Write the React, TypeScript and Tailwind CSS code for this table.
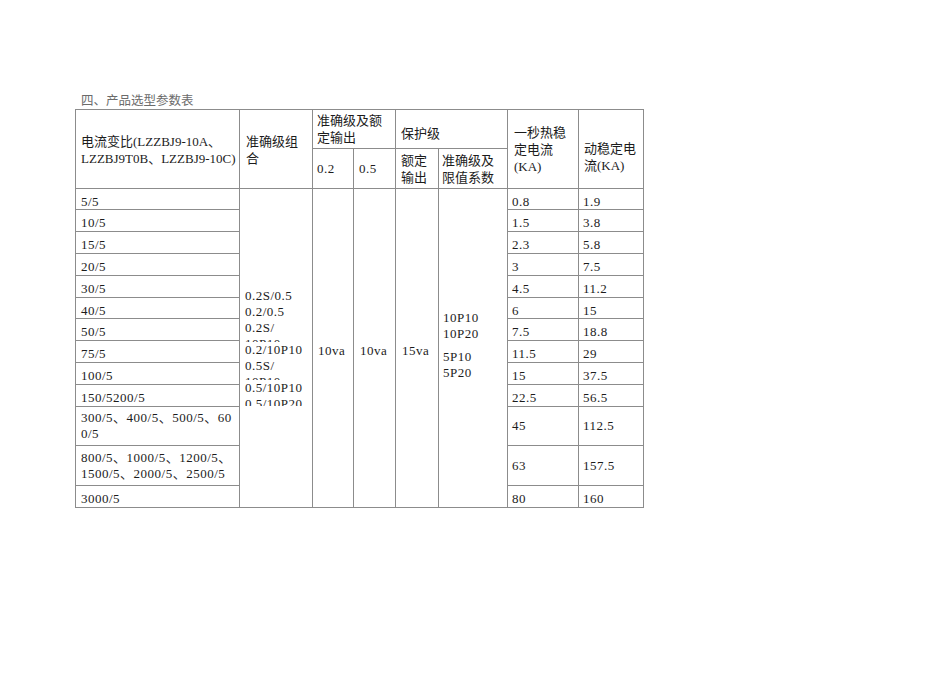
import React from 'react';

type Row = {
    a: string[];
    k: string;
    d: string;
    h: string;
    tall?: boolean;
};

const rows: Row[] = [
    { a: ['5/5'], k: '0.8', d: '1.9', h: 'h-[21px]' },
    { a: ['10/5'], k: '1.5', d: '3.8', h: 'h-[22px]' },
    { a: ['15/5'], k: '2.3', d: '5.8', h: 'h-[22px]' },
    { a: ['20/5'], k: '3', d: '7.5', h: 'h-[22px]' },
    { a: ['30/5'], k: '4.5', d: '11.2', h: 'h-[22px]' },
    { a: ['40/5'], k: '6', d: '15', h: 'h-[21px]' },
    { a: ['50/5'], k: '7.5', d: '18.8', h: 'h-[22px]' },
    { a: ['75/5'], k: '11.5', d: '29', h: 'h-[22px]' },
    { a: ['100/5'], k: '15', d: '37.5', h: 'h-[22px]' },
    { a: ['150/5200/5'], k: '22.5', d: '56.5', h: 'h-[22px]' },
    { a: ['300/5、400/5、500/5、60', '0/5'], k: '45', d: '112.5', h: 'h-[39px]', tall: true },
    { a: ['800/5、1000/5、1200/5、', '1500/5、2000/5、2500/5'], k: '63', d: '157.5', h: 'h-[40px]', tall: true },
    { a: ['3000/5'], k: '80', d: '160', h: 'h-[22px]' },
];

const cell = 'border border-[#8c8c8c] p-0';

export default function App() {
    return (
        <div
            className="min-h-screen bg-white pl-[75px] pt-[94px] text-[#1c1c1c]"
            style={{ fontFamily: '"Liberation Serif", "Noto Sans CJK SC", serif' }}
        >
            <div className="pl-[6px] text-[12.5px] leading-[15px] text-[#6b6b6b]">四、产品选型参数表</div>

            <table className="table-fixed border-collapse text-[13px] leading-[17px]">
                <colgroup>
                    <col className="w-[164px]" />
                    <col className="w-[73px]" />
                    <col className="w-[41px]" />
                    <col className="w-[42px]" />
                    <col className="w-[43px]" />
                    <col className="w-[69px]" />
                    <col className="w-[71px]" />
                    <col className="w-[65px]" />
                </colgroup>
                <tbody>
                    {/* header */}
                    <tr className="h-[39px]">
                        <td rowSpan={2} className={`${cell} pl-[5px] pt-[2px] align-middle leading-[17.5px]`}>
                            电流变比(LZZBJ9-10A、<br />LZZBJ9T0B、LZZBJ9-10C)
                        </td>
                        <td rowSpan={2} className={`${cell} pl-[6px] pt-[2px] align-middle leading-[17.5px]`}>
                            准确级组<br />合
                        </td>
                        <td colSpan={2} className={`${cell} pl-[4px] align-middle`}>
                            准确级及额<br />定输出
                        </td>
                        <td colSpan={2} className={`${cell} pl-[5px] pt-[8px] align-middle`}>
                            保护级
                        </td>
                        <td rowSpan={2} className={`${cell} pl-[6px] align-middle`}>
                            一秒热稳<br />定电流<br />(KA)
                        </td>
                        <td rowSpan={2} className={`${cell} pl-[5px] pt-[16px] align-middle`}>
                            动稳定电<br />流(KA)
                        </td>
                    </tr>
                    <tr className="h-[40px]">
                        <td className={`${cell} pl-[4px] align-middle tracking-[0.5px]`}>0.2</td>
                        <td className={`${cell} pl-[5px] align-middle tracking-[0.5px]`}>0.5</td>
                        <td className={`${cell} pl-[5px] align-middle`}>
                            额定<br />输出
                        </td>
                        <td className={`${cell} pl-[3px] align-middle`}>
                            准确级及<br />限值系数
                        </td>
                    </tr>

                    {/* body */}
                    {rows.map((r, i) => (
                        <tr key={i} className={r.h}>
                            <td className={`${cell} pl-[5px] tracking-[0.5px] ${r.tall ? 'align-middle leading-[16px]' : 'pt-[5px] align-top leading-[15px]'}`}>
                                {r.a.map((line, j) => (
                                    <div key={j}>{line}</div>
                                ))}
                            </td>

                            {i === 0 && (
                                <>
                                    <td rowSpan={13} className={`${cell} align-top tracking-[0.5px]`}>
                                        <div className="h-[217px] overflow-hidden pl-[5px] pt-[99px] leading-[16px]">
                                            <div>0.2S/0.5</div>
                                            <div>0.2/0.5</div>
                                            <div className="h-[22px] overflow-hidden">
                                                0.2S/<br />10P10
                                            </div>
                                            <div>0.2/10P10</div>
                                            <div className="h-[22px] overflow-hidden">
                                                0.5S/<br />10P10
                                            </div>
                                            <div>0.5/10P10</div>
                                            <div>0.5/10P20</div>
                                        </div>
                                    </td>
                                    <td rowSpan={13} className={`${cell} pl-[5px] pt-[4px] align-middle tracking-[0.5px]`}>10va</td>
                                    <td rowSpan={13} className={`${cell} pl-[6px] pt-[4px] align-middle tracking-[0.5px]`}>10va</td>
                                    <td rowSpan={13} className={`${cell} pl-[6px] pt-[4px] align-middle tracking-[0.5px]`}>15va</td>
                                    <td rowSpan={13} className={`${cell} pl-[4px] pb-[6px] align-middle leading-[15.5px] tracking-[0.5px]`}>
                                        <div>10P10</div>
                                        <div>10P20</div>
                                        <div className="mt-[8px]">5P10</div>
                                        <div>5P20</div>
                                    </td>
                                </>
                            )}

                            <td className={`${cell} pl-[4px] tracking-[0.5px] ${r.tall ? 'align-middle leading-[16px]' : 'pt-[5px] align-top leading-[15px]'}`}>{r.k}</td>
                            <td className={`${cell} pl-[4px] tracking-[0.5px] ${r.tall ? 'align-middle leading-[16px]' : 'pt-[5px] align-top leading-[15px]'}`}>{r.d}</td>
                        </tr>
                    ))}
                </tbody>
            </table>
        </div>
    );
}
